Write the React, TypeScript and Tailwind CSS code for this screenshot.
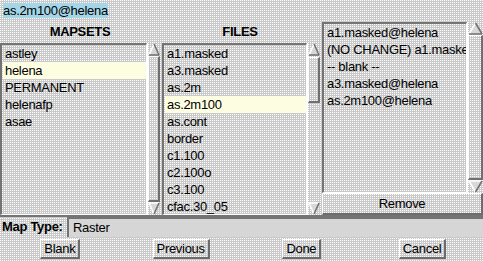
import React from 'react';

const pat =
  "bg-[#c9c9c9] bg-[image:conic-gradient(at_1px_1px,transparent_75%,#ffffff_0)] bg-size-[2px_2px]";

const mapsets = ['astley', 'helena', 'PERMANENT', 'helenafp', 'asae'];
const files = ['a1.masked', 'a3.masked', 'as.2m', 'as.2m100', 'as.cont', 'border', 'c1.100', 'c2.100o', 'c3.100', 'cfac.30_05'];
const picked = ['a1.masked@helena', '(NO CHANGE) a1.masked@helena', '-- blank --', 'a3.masked@helena', 'as.2m100@helena'];

function Arrow({ down, w }: { down?: boolean; w: number }) {
  const m = w / 2;
  return (
    <svg width={w} height={13} className="shrink-0 block">
      {down ? (
        <>
          <polygon points={`1,1 ${w - 1},1 ${m},12`} fill="#d8d8d8" />
          <line x1="1" y1="1" x2={w - 1} y2="1" stroke="#ffffff" strokeWidth="1.5" />
          <line x1="1" y1="1" x2={m} y2="12" stroke="#ffffff" strokeWidth="1.5" />
          <line x1={w - 1} y1="1" x2={m} y2="12" stroke="#6f6f6f" strokeWidth="1.5" />
        </>
      ) : (
        <>
          <polygon points={`${m},1 ${w - 1},12 1,12`} fill="#d8d8d8" />
          <line x1={m} y1="1" x2="1" y2="12" stroke="#ffffff" strokeWidth="1.5" />
          <line x1={m} y1="1" x2={w - 1} y2="12" stroke="#6f6f6f" strokeWidth="1.5" />
          <line x1="1" y1="12" x2={w - 1} y2="12" stroke="#6f6f6f" strokeWidth="1.5" />
        </>
      )}
    </svg>
  );
}

function ScrollBar({ w, top, h }: { w: number; top: number; h: number | null }) {
  return (
    <div className="flex flex-col h-full shrink-0 border-l border-white" style={{ width: w }}>
      <Arrow w={w - 1} />
      <div className="flex-1 relative">
        <div
          className="absolute left-0 right-0 border-l border-t border-white border-r-2 border-b-2 border-r-[#707070] border-b-[#707070]"
          style={h === null ? { top: 0, bottom: 0 } : { top, height: h }}
        />
      </div>
      <Arrow w={w - 1} down />
    </div>
  );
}

function List({ items, sel, width }: { items: string[]; sel?: number; width: number }) {
  return (
    <div
      className="h-full shrink-0 overflow-hidden border-t-2 border-l-2 border-[#747474] border-r border-b border-r-white border-b-white"
      style={{ width }}
    >
      {items.map((t, i) => (
        <div
          key={t}
          className={
            'h-[17px] leading-[17px] pl-[2px] ml-[1px] whitespace-nowrap ' +
            (i === sel ? 'bg-[#fdfde2]' : '')
          }
        >
          {t}
        </div>
      ))}
    </div>
  );
}

function Btn({ label }: { label: string }) {
  return (
    <div className="h-[20px] leading-[17px] px-[3px] border-l border-t border-white border-r-2 border-b-2 border-r-[#6c6c6c] border-b-[#6c6c6c]">
      {label}
    </div>
  );
}

export default function App() {
  return (
    <div className={`w-[483px] h-[261px] flex flex-col overflow-hidden text-black text-[13px] tracking-[-0.3px] font-['Liberation_Sans',Arial,sans-serif] ${pat}`}>
      {/* selection entry */}
      <div className="h-[20px] pl-[3px] pt-[1px] shrink-0">
        <span className="bg-[#a4d6e8] leading-[15px] inline-block">as.2m100@helena</span>
      </div>

      <div className="flex h-[195px] shrink-0">
        <div className="w-[320px] flex flex-col">
          <div className="h-[23px] flex font-bold leading-[15px] pt-[4px]">
            <div className="w-[160px] text-center">MAPSETS</div>
            <div className="w-[160px] text-center">FILES</div>
          </div>
          <div className="flex h-[172px]">
            <List items={mapsets} sel={1} width={147} />
            <ScrollBar w={13} top={0} h={null} />
            <div className="w-[2px]" />
            <List items={files} sel={3} width={145} />
            <ScrollBar w={13} top={1} h={46} />
          </div>
        </div>

        <div className="w-[163px] flex flex-col pt-[2px] pl-[2px]">
          <div className="flex h-[171px]">
            <List items={picked} width={145} />
            <ScrollBar w={16} top={0} h={null} />
          </div>
          <div className="h-[22px] leading-[19px] text-center border-l border-t border-white border-r-2 border-b-2 border-r-[#6c6c6c] border-b-[#6c6c6c]">
            Remove
          </div>
        </div>
      </div>

      <div className="flex h-[22px] border-t-2 border-[#747474] shrink-0">
        <div className="w-[67px] pl-[2px] font-bold leading-[20px]">Map Type:</div>
        <div className="flex-1 border-l-2 border-t-2 border-[#747474] pl-[4px] leading-[17px] bg-[#d6d6d6]">Raster</div>
      </div>

      <div className="grid grid-cols-4 justify-items-center pt-[2px]">
        <Btn label="Blank" />
        <Btn label="Previous" />
        <Btn label="Done" />
        <Btn label="Cancel" />
      </div>
    </div>
  );
}
